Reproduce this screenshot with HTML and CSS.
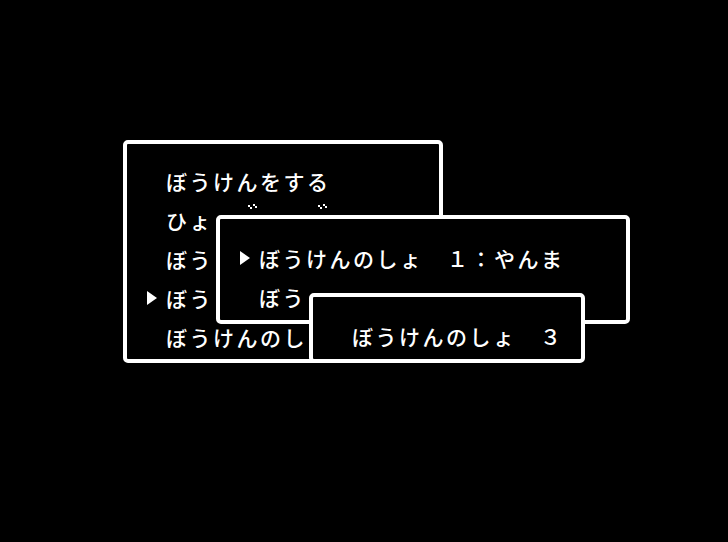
FILE: index.html
```html
<!DOCTYPE html>
<html lang="ja">
<head>
<meta charset="utf-8">
<title>ぼうけんのしょ</title>
<link rel="stylesheet" href="styles.css">
</head>
<body>
<div class="screen">
  <div class="win win-main">
    <div class="row"><span class="cur"></span><span class="txt">ぼうけんをする</span></div>
    <div class="row"><span class="cur"></span><span class="txt">ひょ</span><span class="gap g1"></span><svg class="dak" width="10" height="8" viewBox="0 0 10 8"><path d="M1 1h2v2h-2zM3 3h2v2h-2zM6 0h2v2h-2zM8 2h2v2h-2z" fill="#fff"/></svg><span class="gap g2"></span><svg class="dak" width="10" height="8" viewBox="0 0 10 8"><path d="M1 1h2v2h-2zM3 3h2v2h-2zM6 0h2v2h-2zM8 2h2v2h-2z" fill="#fff"/></svg></div>
    <div class="row"><span class="cur"></span><span class="txt">ぼう</span></div>
    <div class="row"><span class="cur on"></span><span class="txt">ぼう</span></div>
    <div class="row"><span class="cur"></span><span class="txt">ぼうけんのし</span></div>
  </div>
  <div class="win win-files">
    <div class="row"><span class="cur on"></span><span class="txt">ぼうけんのしょ　１：やんま</span></div>
    <div class="row"><span class="cur"></span><span class="txt">ぼう</span></div>
  </div>
  <div class="win win-slot">
    <div class="row"><span class="cur"></span><span class="txt">ぼうけんのしょ　３</span></div>
  </div>
</div>
</body>
</html>
```

FILE: styles.css
```css
html, body {
  margin: 0;
  background: #000;
}

.screen {
  position: relative;
  width: 728px;
  height: 542px;
  box-sizing: border-box;
  padding: 140px 0 0 123px;
  background: #000;
  overflow: hidden;
}

.win {
  box-sizing: border-box;
  border: 4px solid #fff;
  border-radius: 5px;
  background: #000;
  overflow: hidden;
}

.win-main {
  width: 320px;
  height: 223px;
  padding: 17.5px 0 0 20px;
}

.win-files {
  position: absolute;
  left: 216px;
  top: 215px;
  width: 414px;
  height: 109px;
  padding: 19.5px 0 0 20px;
}

.win-slot {
  position: absolute;
  left: 309px;
  top: 293px;
  width: 276px;
  height: 70px;
  padding: 19.5px 0 0 20px;
}

.row {
  display: flex;
  align-items: center;
  height: 39px;
  color: #fff;
  font-family: "Noto Sans CJK JP", sans-serif;
  font-weight: 500;
  font-size: 21px;
  line-height: 39px;
  letter-spacing: 2.5px;
  white-space: nowrap;
}

.cur {
  flex: none;
  width: 19px;
  height: 39px;
  display: flex;
  align-items: center;
}

.cur.on::before {
  content: "";
  display: block;
  width: 0;
  height: 0;
  border-left: 10px solid #fff;
  border-top: 7px solid transparent;
  border-bottom: 7px solid transparent;
}

.gap {
  flex: none;
}

.g1 {
  width: 34px;
}

.g2 {
  width: 60px;
}

.dak {
  flex: none;
  align-self: flex-start;
  margin-top: 3px;
}
```
